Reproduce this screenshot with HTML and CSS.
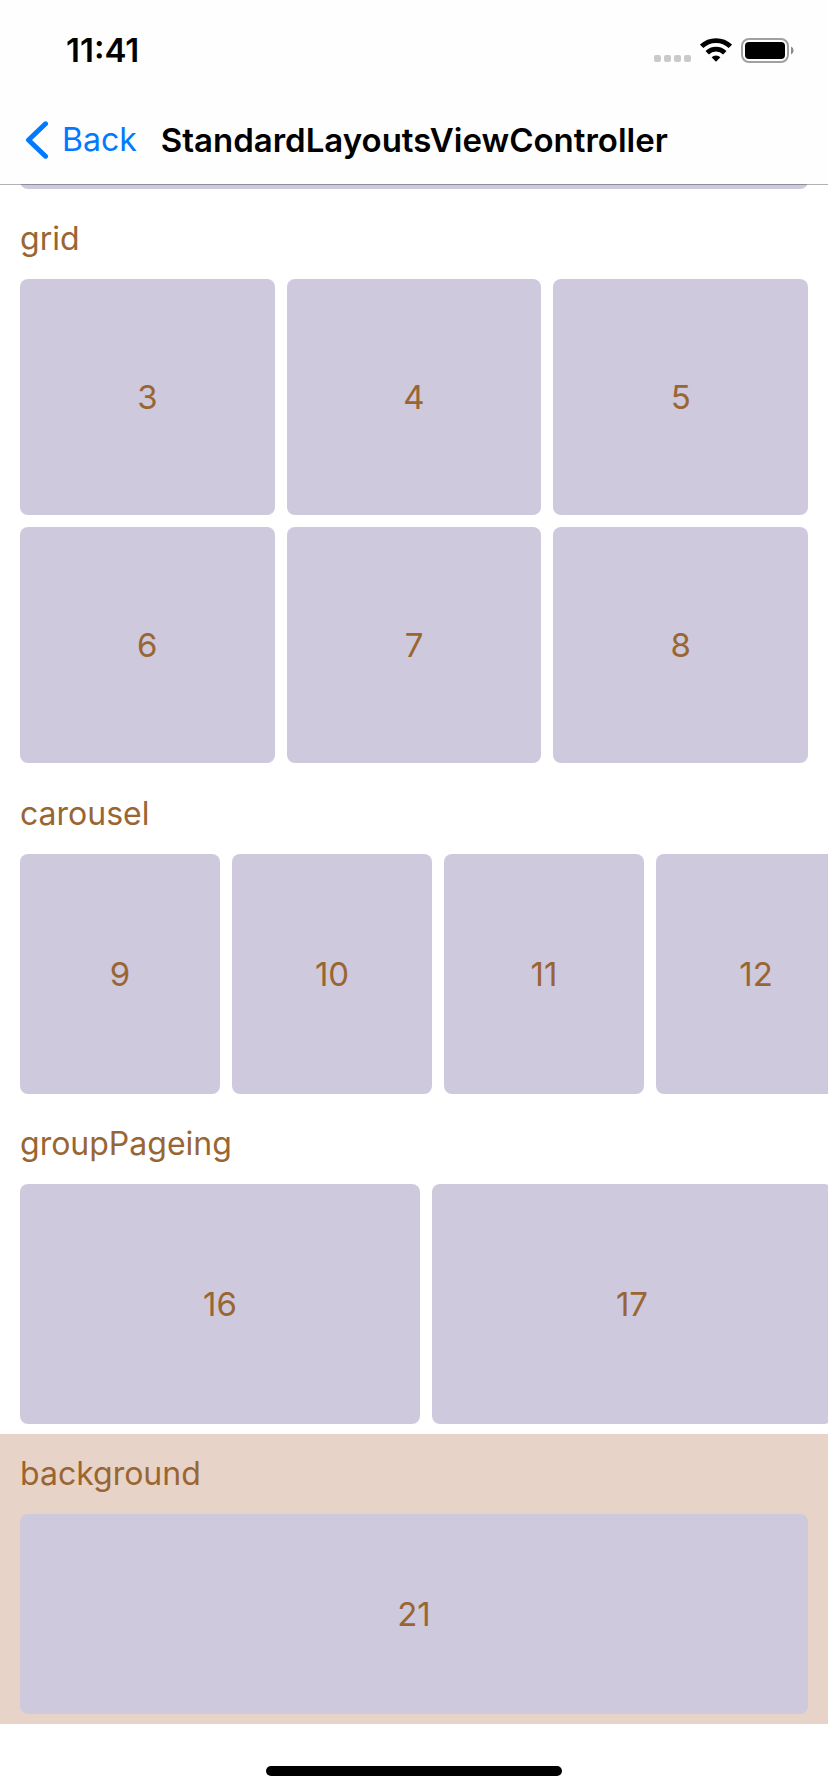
FILE: index.html
```html
<!DOCTYPE html>
<html lang="en">
<head>
<meta charset="utf-8">
<meta name="viewport" content="width=device-width, initial-scale=1">
<title>StandardLayoutsViewController</title>
<link rel="stylesheet" href="styles.css">
</head>
<body>
<header class="top-bar">
  <div class="status">
    <time class="status-time">11:41</time>
    <div class="status-icons">
      <svg class="icon-signal" width="37" height="24" viewBox="0 0 37 24" fill="#cacaca" aria-hidden="true">
        <rect x="0" y="17" width="7" height="7" rx="2"/><rect x="10" y="17" width="7" height="7" rx="2"/><rect x="20" y="17" width="7" height="7" rx="2"/><rect x="30" y="17" width="7" height="7" rx="2"/>
      </svg>
      <svg class="icon-wifi" width="32" height="24" viewBox="0 0 32 24" aria-hidden="true">
        <g fill="none" stroke="#000" stroke-width="4.8">
          <path d="M1.6 8.4a20.6 20.6 0 0 1 28.8 0"/>
          <path d="M7.2 14.7a12.6 12.6 0 0 1 17.6 0"/>
        </g>
        <path d="M11.6 19.3a6.6 6.6 0 0 1 8.8 0L16 23.8z"/>
      </svg>
      <svg class="icon-battery" width="53" height="25" viewBox="0 0 53 25" aria-hidden="true">
        <rect x="1" y="1" width="46" height="23" rx="7" fill="none" stroke="#a0a0a0" stroke-width="2"/>
        <rect x="4" y="4" width="40" height="17" rx="4"/>
        <path d="M50 8.5a4.4 4.4 0 0 1 0 8z" fill="#8c8c8c"/>
      </svg>
    </div>
  </div>
  <nav class="nav">
    <button class="back" type="button">
      <svg width="24" height="38" viewBox="0 0 24 38" fill="none" stroke="#007aff" stroke-width="5" stroke-linecap="round" stroke-linejoin="round" aria-hidden="true"><path d="M21.5 2.8 4.5 19l17 16.2"/></svg>
      <span>Back</span>
    </button>
    <h1 class="title">StandardLayoutsViewController</h1>
  </nav>
</header>
<main>
  <div class="peek"><div class="card peek-card"></div></div>
  <section class="section section-grid">
    <h2 class="label">grid</h2>
    <div class="grid">
      <div class="card">3</div>
      <div class="card">4</div>
      <div class="card">5</div>
      <div class="card">6</div>
      <div class="card">7</div>
      <div class="card">8</div>
    </div>
  </section>
  <section class="section">
    <h2 class="label">carousel</h2>
    <div class="row">
      <div class="card card-small">9</div>
      <div class="card card-small">10</div>
      <div class="card card-small">11</div>
      <div class="card card-small">12</div>
    </div>
  </section>
  <section class="section">
    <h2 class="label">groupPageing</h2>
    <div class="row">
      <div class="card card-page">16</div>
      <div class="card card-page">17</div>
    </div>
  </section>
  <section class="section section-tinted">
    <h2 class="label">background</h2>
    <div class="single">
      <div class="card card-wide">21</div>
    </div>
  </section>
</main>
<footer class="home"><div class="home-bar"></div></footer>
</body>
</html>
```
FILE: styles.css
```css
* {
  box-sizing: border-box;
}

body {
  margin: 0;
  background: #fff;
  color: #963;
  font-family: Inter, "Liberation Sans", sans-serif;
  font-size: 32px;
  line-height: 40px;
  overflow-x: hidden;
}

.top-bar {
  position: relative;
  z-index: 1;
  background: #fefefe;
  box-shadow: 0 1px rgba(0, 0, 0, 0.3);
  color: #000;
}

.status {
  display: flex;
  align-items: center;
  justify-content: space-between;
  height: 96px;
  padding: 4px 34px 0 66px;
}

.status-time {
  font-size: 33px;
  font-weight: 600;
}

.status-icons {
  display: flex;
  align-items: center;
  gap: 9px;
}

.nav {
  display: flex;
  align-items: center;
  gap: 24px;
  height: 88px;
  padding: 0 24px;
}

.back {
  display: flex;
  align-items: center;
  gap: 14px;
  padding: 0;
  border: 0;
  background: none;
  color: #007aff;
  font: inherit;
}

.title {
  margin: 0;
  font-size: 33px;
  font-weight: 600;
}

.peek {
  display: flex;
  align-items: flex-end;
  height: 5px;
  margin-bottom: 10px;
  padding: 0 20px;
  overflow: hidden;
}

.peek-card {
  flex: 1;
  height: 40px;
}

.section {
  padding-bottom: 10px;
}

.section-grid {
  padding-bottom: 11px;
}

.section-tinted {
  background: #e8d3c8;
}

.label {
  margin: 0;
  padding: 20px;
  font-size: 32px;
  font-weight: 400;
}

.card {
  display: flex;
  align-items: center;
  justify-content: center;
  border-radius: 8px;
  background: #cec9dd;
  font-size: 33px;
}

.grid {
  display: grid;
  grid-template-columns: repeat(3, 1fr);
  grid-auto-rows: 236px;
  gap: 12px;
  padding: 0 20px;
}

.row {
  display: flex;
  gap: 12px;
  padding-left: 20px;
  overflow: hidden;
}

.card-small {
  flex: none;
  width: 200px;
  height: 240px;
}

.card-page {
  flex: none;
  width: 400px;
  height: 240px;
}

.single {
  padding: 0 20px;
}

.card-wide {
  height: 200px;
}

.home {
  display: flex;
  justify-content: center;
  padding: 42px 0 16px;
}

.home-bar {
  width: 296px;
  height: 10px;
  border-radius: 5px;
  background: #000;
}
```
